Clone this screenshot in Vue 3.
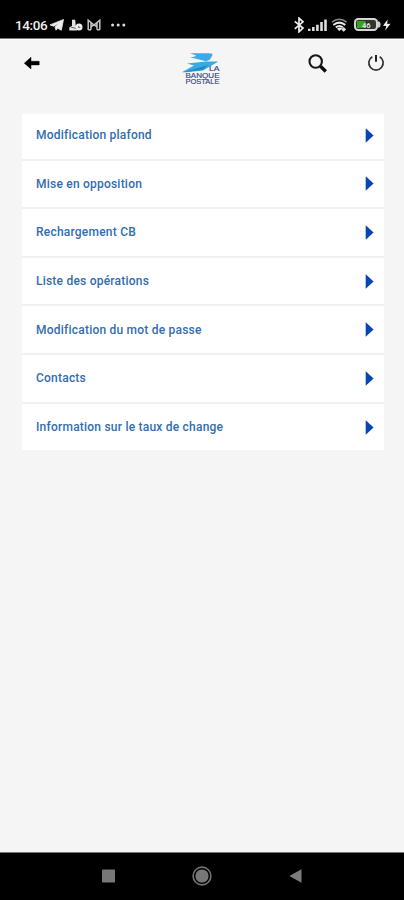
<script setup>
const items = [
  'Modification plafond',
  'Mise en opposition',
  'Rechargement CB',
  'Liste des opérations',
  'Modification du mot de passe',
  'Contacts',
  'Information sur le taux de change',
]
</script>

<template>
  <div class="screen">
    <div class="status">
      <span class="time">14:06</span>
      <svg class="telegram" width="14" height="12" viewBox="0 0 14 12"><path d="M0 5.9 13.5.5 11.3 11.3 7.8 9.3 6 11.2 5 8 9.2 4.1 3.8 7.2Z" fill="#ececec" stroke="#ececec" stroke-width=".8" /></svg>
      <svg class="person" width="14" height="12" viewBox="0 0 14 12"><path d="M3 .8h3.2l.5 5.5L8 11.5H.3V8.6L3 6.8Z" fill="#e2e2e2" /><circle cx="10" cy="7.9" r="3.5" fill="#eee" /><path d="M1.8 8 6.7 9.4M9.7 6.8v1.8h1.5" stroke="#444" fill="none" stroke-width=".8" /></svg>
      <svg class="mail" width="14" height="12" viewBox="0 0 14 12"><path d="M1.2 10.8V1.2L7 6l5.8-4.8v9.6M4 3.6v7.2M10 3.6v7.2M1.2 10.8H4M10 10.8h2.8M4 7.8 7 5.7l3 2.1" fill="none" stroke="#c4c4c4" stroke-width="1.5" /></svg>
      <svg class="dots" width="15" height="4" viewBox="0 0 15 4"><g fill="#ddd"><circle cx="1.6" cy="2" r="1.5" /><circle cx="7.2" cy="2" r="1.5" /><circle cx="12.8" cy="2" r="1.5" /></g></svg>
      <div class="system">
        <svg width="10" height="16" viewBox="0 0 10 16"><path d="M.8 4.3 9 11.1 5 14.8V1.2L9 4.8.8 11.8" fill="none" stroke="#eee" stroke-width="1.7" /></svg>
        <svg width="19" height="12" viewBox="0 0 19 12"><path d="M1.2 12V9.8M5.3 12V8M9.4 12V5.7M13.5 12V3M17.5 12V.4" stroke="#ddd" stroke-width="2.6" /></svg>
        <svg width="17" height="14" viewBox="0 0 17 14"><path d="M1 4.2Q8.3-1.6 15.6 4.2" fill="none" stroke="#888" stroke-width="1.5" /><path d="M2.3 7Q8.3 2.2 14.3 7M4.8 9.4q3.5-2.8 7 0" fill="none" stroke="#e6e6e6" stroke-width="2" /><path d="m6 10.7 2.3 2.4 3-2.6Q8.5 8.6 6 10.7Z" fill="#eee" /><path d="M10.3 11.5 12.6 9l2.5 2.5-2.5 2.3Z" fill="#ddd" /></svg>
        <svg class="battery" width="27" height="13" viewBox="0 0 27 13"><rect x="1" y="1" width="22" height="11" rx="3.2" fill="#30362f" stroke="#d5d5d5" stroke-width="2" /><path d="M3 3h8.5v7H3Z" fill="#35a51d" /><path d="M24 3.2q2.6.3 2.6 3.3T24 9.8Z" fill="#ccc" /><text x="8" y="9.5" class="charge">46</text></svg>
        <svg width="8" height="12" viewBox="0 0 8 12"><path d="M4.6.5 0 6.7l3.3.2L2.1 11.5 7.6 4.7l-3.4.2Z" fill="#eee" /></svg>
      </div>
    </div>

    <header class="header">
      <svg class="back" width="16" height="12" viewBox="0 0 16 12"><path d="M.3 6.2 7 .3v4h8.2v3.6H7v4Z" fill="#000" stroke="#000" stroke-width=".5" /></svg>
      <svg class="logo" width="40" height="33" viewBox="0 0 40 33">
        <path d="M9 1.2h19.2q4 0 3.2 2L28.8 7.8 25 9.3 9 5.2Q14 5 15 3.5Z" fill="#35aee8" />
        <path d="M6 11.6 25 9.4h12.4L22 18.5 5.5 20.2H.8L13 13.4Z" fill="#3ba9e4" />
        <path d="M2 20.2 27 13 22 17.8Z" fill="#208acb" />
        <g class="brand"><text x="28" y="19.1" textLength="10.5" lengthAdjust="spacingAndGlyphs">LA</text><text x="4.5" y="25.6" textLength="34" lengthAdjust="spacingAndGlyphs">BANQUE</text><text x="4.5" y="32.1" textLength="34" lengthAdjust="spacingAndGlyphs">POSTALE</text></g>
      </svg>
      <svg class="search" width="20" height="20" viewBox="0 0 20 20"><circle cx="7.7" cy="7.5" r="6.2" fill="none" stroke="#161616" stroke-width="2.1" /><path d="m12.5 12.3 5.3 5.2" stroke="#0c0c0c" stroke-width="3.4" /></svg>
      <svg class="power" width="18" height="18" viewBox="0 0 18 18"><path d="M5.3 2.7a7.2 7.2 0 1 0 7.4 0" fill="none" stroke="#303030" stroke-width="1.7" /><path d="M9 1v6.8" stroke="#222" stroke-width="2" /></svg>
    </header>

    <ul class="menu">
      <li v-for="item in items" :key="item">
        <span>{{ item }}</span>
        <svg width="9" height="15" viewBox="0 0 9 15"><path d="M.7.3 8.6 7.5.7 14.7Z" fill="#0645b2" /></svg>
      </li>
    </ul>

    <nav class="nav">
      <svg width="13" height="14" viewBox="0 0 13 14"><rect y=".5" width="13" height="13" rx=".7" fill="#777" /></svg>
      <svg width="20" height="20" viewBox="0 0 20 20"><circle cx="10" cy="10" r="8.9" fill="none" stroke="#737373" stroke-width="1.6" /><circle cx="10" cy="10" r="6.6" fill="#777" /></svg>
      <svg width="13" height="14" viewBox="0 0 13 14"><path d="M.3 7 12.5.3v13.4Z" fill="#7c7c7c" /></svg>
    </nav>
  </div>
</template>

<style>
body { margin: 0; background: #f5f5f5; }
</style>

<style scoped>
.screen { width: 404px; height: 900px; display: flex; flex-direction: column; background: #f5f5f5; font-family: Roboto, sans-serif; overflow: hidden; }
svg { display: block; flex: none; }
.status { box-sizing: border-box; height: 39px; background: #000; border-bottom: 1px solid #777; display: flex; align-items: center; padding: 11px 13px 0 15px; flex: none; color: #eee; }
.time { width: 35px; font-size: 13.5px; line-height: 16px; font-weight: 500; letter-spacing: -.4px; white-space: nowrap; }
.person { margin-left: 5px; }
.mail { margin-left: 4px; }
.dots { margin-left: 10px; }
.system { display: flex; align-items: center; margin-left: auto; gap: 4px; }
.battery { margin: 0 -2px 0 2px; }
.charge { font-size: 7.5px; font-weight: 700; fill: #ddd; }
.header { height: 74.5px; flex: none; display: flex; align-items: flex-start; border-top: 1px solid #fff; box-sizing: border-box; }
.back { margin: 17px 0 0 24px; }
.logo { margin: 12px 0 0 141px; }
.brand { font-family: "Liberation Sans", sans-serif; font-size: 7px; fill: #354580; stroke: #354580; stroke-width: .15px; }
.search { margin: 14px 0 0 86.5px; }
.power { margin: 13.5px 0 0 39.5px; }
.menu { list-style: none; margin: 0 20px 0 22px; padding: 0; background: #fff; }
.menu li { box-sizing: border-box; height: 48.67px; border-top: 2px solid #eff1f3; padding: 0 10px 0 14px; display: flex; align-items: center; justify-content: space-between; font-size: 12px; font-weight: 500; letter-spacing: .22px; color: #326daf; }
.menu li:first-child { height: 45px; border: 0; padding-bottom: 2px; }
.nav { margin-top: auto; box-sizing: border-box; height: 48px; flex: none; background: #000; border-top: 1px solid #777; display: flex; align-items: center; justify-content: space-between; padding: 0 102px 1px; }
</style>
